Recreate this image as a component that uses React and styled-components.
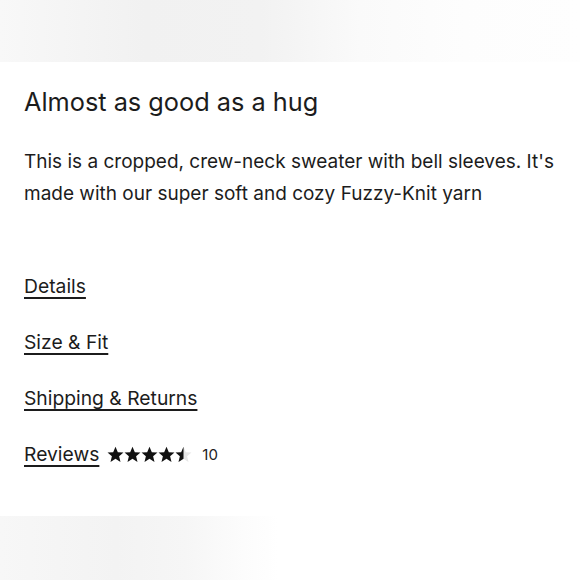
import styled, { createGlobalStyle } from 'styled-components'

const Global = createGlobalStyle`
  html, body { margin: 0; padding: 0; background: #fff; }
  body { font-family: "Inter", "Liberation Sans", sans-serif; color: #1c1c1c; }
`

const Page = styled.div`
  width: 580px;
  height: 580px;
  display: flex;
  flex-direction: column;
  overflow: hidden;
`

const TopBand = styled.div`
  height: 62px;
  flex-shrink: 0;
  background: linear-gradient(to right, #f8f8f8 0%, #f1f1f1 25%, #f2f2f2 45%, #fafafa 62%, #fdfdfd 80%, #fefefe 100%);
`

const Content = styled.main`
  flex: 1;
  padding: 24px 24px 0 24px;
`

const Title = styled.h1`
  margin: 0;
  font-size: 25.3px;
  font-weight: 400;
  line-height: 32px;
  letter-spacing: 0;
`

const Description = styled.p`
  margin: 28px 0 0 0;
  font-size: 19px;
  line-height: 32px;
`

const LinkList = styled.ul`
  list-style: none;
  margin: 63px 0 0 0;
  padding: 0;
  display: flex;
  flex-direction: column;
  gap: 30px;
`

const Item = styled.li`
  display: flex;
  align-items: center;
  height: 26px;
`

const Link = styled.a`
  font-size: 19.3px;
  color: #1c1c1c;
  text-decoration: underline;
  text-underline-offset: 4px;
  text-decoration-thickness: 1.5px;
`

const Stars = styled.span`
  display: inline-flex;
  margin-left: 8px;
`

const Count = styled.span`
  font-size: 15px;
  margin-left: 10px;
  color: #222;
`

const BottomBand = styled.div`
  height: 64px;
  flex-shrink: 0;
  background: linear-gradient(to right, #f7f7f7 0%, #f3f3f3 20%, #f6f6f6 32%, #fcfcfc 42%, #fff 48%);
`

const STAR = 'M8 0.8l2.2 5 5.3 0.4-4.1 3.5 1.3 5.3L8 12.1 3.3 15l1.3-5.3L0.5 6.2l5.3-0.4z'

const Star = ({ fill }) => (
  <svg width="17" height="17" viewBox="0 0 16 16">
    <defs>
      <clipPath id="half">
        <rect x="0" y="0" width="8" height="16" />
      </clipPath>
    </defs>
    {fill === 'half' ? (
      <>
        <path d={STAR} fill="#e6e6e6" />
        <path d={STAR} fill="#111" clipPath="url(#half)" />
      </>
    ) : (
      <path d={STAR} fill="#111" />
    )}
  </svg>
)

const links = ['Details', 'Size & Fit', 'Shipping & Returns']

export default function App() {
  return (
    <Page>
      <Global />
      <TopBand />
      <Content>
        <Title>Almost as good as a hug</Title>
        <Description>
          This is a cropped, crew-neck sweater with bell sleeves. It's made with our super soft and cozy Fuzzy-Knit yarn
        </Description>
        <LinkList>
          {links.map((l) => (
            <Item key={l}>
              <Link>{l}</Link>
            </Item>
          ))}
          <Item>
            <Link>Reviews</Link>
            <Stars>
              <Star /><Star /><Star /><Star /><Star fill="half" />
            </Stars>
            <Count>10</Count>
          </Item>
        </LinkList>
      </Content>
      <BottomBand />
    </Page>
  )
}
